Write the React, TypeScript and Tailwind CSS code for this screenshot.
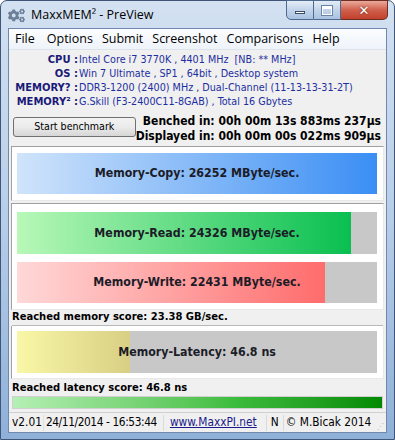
import React from "react";
import { FaCogs } from "react-icons/fa";

const T = "font-['DejaVu_Sans_Condensed','DejaVu_Sans',sans-serif]";

function Bar({
  pct,
  from,
  to,
  label,
  h,
}: {
  pct: number;
  from: string;
  to: string;
  label: string;
  h: number;
}) {
  return (
    <div className="relative w-[360px] shrink-0 bg-[#c8c8c8]" style={{ height: h }}>
      <div
        className="absolute left-0 top-0 bottom-0"
        style={{ width: `${pct}%`, background: `linear-gradient(to right, ${from}, ${to})` }}
      />
      <div className={`absolute inset-0 flex items-center justify-center whitespace-nowrap text-[12.3px] font-bold text-[#1c1c28] ${T}`}>
        {label}
      </div>
    </div>
  );
}

export default function App() {
  return (
    <div className="w-[395px] h-[440px] overflow-hidden bg-white">
      <div className="w-[395px] h-[440px] rounded-t-[7px] border border-[#3f5679] bg-gradient-to-b from-[#d3e1f1] via-[#b7cde8] to-[#8fb0d8] flex flex-col">
        {/* title bar */}
        <div className="h-[27px] shrink-0 relative flex items-start">
          <div className="pl-[7px] pt-[5px] flex items-center gap-[6px]">
            <FaCogs className="w-[17px] h-[17px] text-[#6b7f96]" />
            <span className="font-['Open_Sans',sans-serif] text-[12.5px] text-black leading-[18px]">
              MaxxMEM² - PreView
            </span>
          </div>
          <div className="absolute top-[-1px] right-[6px] flex">
            <div className="w-[28px] h-[20px] rounded-bl-[5px] border border-[#50698e] bg-gradient-to-b from-[#e4edf7] via-[#c2d4ea] to-[#a9c2e2] flex items-end justify-center pb-[5px]">
              <div className="w-[10px] h-[3px] bg-white border border-[#3a4e6a]" />
            </div>
            <div className="w-[27px] h-[20px] border-y border-r border-[#50698e] bg-gradient-to-b from-[#e4edf7] via-[#c2d4ea] to-[#a9c2e2] flex items-center justify-center">
              <div className="w-[10px] h-[9px] border-[1.5px] border-white border-t-[3px] outline outline-1 outline-[#6a84a6]" />
            </div>
            <div className="w-[47px] h-[20px] rounded-br-[5px] border-y border-r border-[#6e2e24] bg-gradient-to-b from-[#eaa99b] via-[#d0604c] to-[#c2402c] flex items-center justify-center">
              <span className="text-white font-bold text-[13px] leading-none font-['DejaVu_Sans',sans-serif] [text-shadow:0_0_2px_#5a1a10]">
                ✕
              </span>
            </div>
          </div>
        </div>

        {/* client area */}
        <div className="mx-[7px] h-[405px] shrink-0 border border-[#6f88ab] bg-[#f0f0f0] flex flex-col">
          {/* menu */}
          <div className="h-[21px] shrink-0 bg-gradient-to-b from-[#fcfdfe] to-[#eef3fa] border-b border-[#dde3ea] flex items-center pl-[6px] gap-[9px] font-['Open_Sans',sans-serif] text-[12.5px] text-black">
            <span>File</span>
            <span className="ml-[3px]">Options</span>
            <span>Submit</span>
            <span>Screenshot</span>
            <span>Comparisons</span>
            <span>Help</span>
          </div>

          {/* info */}
          <div className={`h-[61px] shrink-0 pt-[3px] leading-[14px] ${T}`}>
            {[
              ["CPU :", "Intel Core i7 3770K , 4401 MHz  [NB: ** MHz]"],
              ["OS :", "Win 7 Ultimate , SP1 , 64bit , Desktop system"],
              ["MEMORY? :", "DDR3-1200 (2400) MHz , Dual-Channel (11-13-13-31-2T)"],
              ["MEMORY² :", "G.Skill (F3-2400C11-8GAB) , Total 16 Gbytes"],
            ].map(([k, v]) => (
              <div key={k} className="flex items-baseline whitespace-nowrap">
                <span className="w-[69px] text-right font-bold text-[11.1px] text-[#1a1a78] whitespace-pre">{k}</span>
                <span className="pl-[1px] text-[10.7px] text-[#1c2ea0] whitespace-pre">{v}</span>
              </div>
            ))}
          </div>

          {/* button row */}
          <div className="h-[35px] shrink-0 flex items-start justify-between pl-[4px] pr-[5px]">
            <div className="mt-[6px] w-[135px] h-[20px] rounded-[3px] border border-[#707070] bg-gradient-to-b from-[#f2f2f2] via-[#ebebeb] to-[#d6d6d6] flex items-center justify-center">
              <span className={`text-[10.6px] text-black ${T}`}>Start benchmark</span>
            </div>
            <div className={`pt-[3px] text-[12px] font-bold leading-[15px] text-right text-black whitespace-nowrap ${T}`}>
              <div>Benched in: 00h 00m 13s 883ms 237µs</div>
              <div>Displayed in: 00h 00m 00s 022ms 909µs</div>
            </div>
          </div>

          {/* panel 1 */}
          <div className="mx-[2px] h-[55px] shrink-0 bg-white border-t border-l border-[#a0a0a0] border-r border-b border-r-[#e8e8e8] border-b-[#e8e8e8] pl-[5px] pt-[6px]">
            <Bar pct={100} from="#d0e4fb" to="#3a8ef4" label="Memory-Copy: 26252 MByte/sec." h={41} />
          </div>

          {/* panel 2 */}
          <div className="mt-[2px] mx-[2px] h-[107px] shrink-0 bg-white border-t border-l border-[#a0a0a0] border-r border-b border-r-[#e8e8e8] border-b-[#e8e8e8] pl-[5px] pt-[8px] flex flex-col gap-[8px]">
            <Bar pct={92.8} from="#b8f8b8" to="#09bf50" label="Memory-Read: 24326 MByte/sec." h={42} />
            <Bar pct={85.6} from="#ffd8d8" to="#ff6c6c" label="Memory-Write: 22431 MByte/sec." h={41} />
          </div>

          {/* memory score */}
          <div className={`h-[14px] shrink-0 pl-[3px] text-[11.1px] font-bold leading-[14px] text-black whitespace-nowrap ${T}`}>
            Reached memory score: 23.38 GB/sec.
          </div>
          <div className="mx-[3px] mt-[1px] h-px shrink-0 bg-[#b8b8b8]" />

          {/* panel 3 */}
          <div className="mx-[2px] h-[53px] shrink-0 bg-white border-l border-[#a0a0a0] border-r border-b border-r-[#e8e8e8] border-b-[#e8e8e8] pl-[5px] pt-[5px]">
            <Bar pct={31.4} from="#f9f7a6" to="#d8cf84" label="Memory-Latency: 46.8 ns" h={42} />
          </div>

          {/* latency score */}
          <div className={`h-[15px] shrink-0 pl-[3px] mt-[1px] text-[11.1px] font-bold leading-[15px] text-black whitespace-nowrap ${T}`}>
            Reached latency score: 46.8 ns
          </div>
          <div className="mx-[3px] mt-[1px] h-[13px] shrink-0 border border-[#d0d0d0] bg-gradient-to-r from-[#b4f0b4] via-[#3cbc3c] via-60% to-[#008a00]" />

          {/* status bar */}
          <div className={`mt-[3px] flex-1 min-h-0 border-t border-[#d0d0d0] flex items-center whitespace-nowrap text-[11.8px] text-black ${T}`}>
            <span className="pl-[3px] pr-[1px]">v2.01</span>
            <span className="w-px h-[16px] bg-[#e0e0e0]" />
            <span className="pl-[2px] pr-[6px] tracking-[-0.4px]">24/11/2014 - 16:53:44</span>
            <span className="w-px h-[16px] bg-[#dadada]" />
            <span className="pl-[6px] pr-[9px] text-[#1a1a8a] underline">www.MaxxPI.net</span>
            <span className="w-px h-[16px] bg-[#dadada]" />
            <span className="px-[4px]">N</span>
            <span className="w-px h-[16px] bg-[#dadada]" />
            <span className="pl-[2px]">© M.Bicak 2014</span>
            <span className="ml-auto mr-[2px] mt-[8px] text-[8px] text-[#b0b0b0] leading-none">⋰</span>
          </div>
        </div>
      </div>
    </div>
  );
}
